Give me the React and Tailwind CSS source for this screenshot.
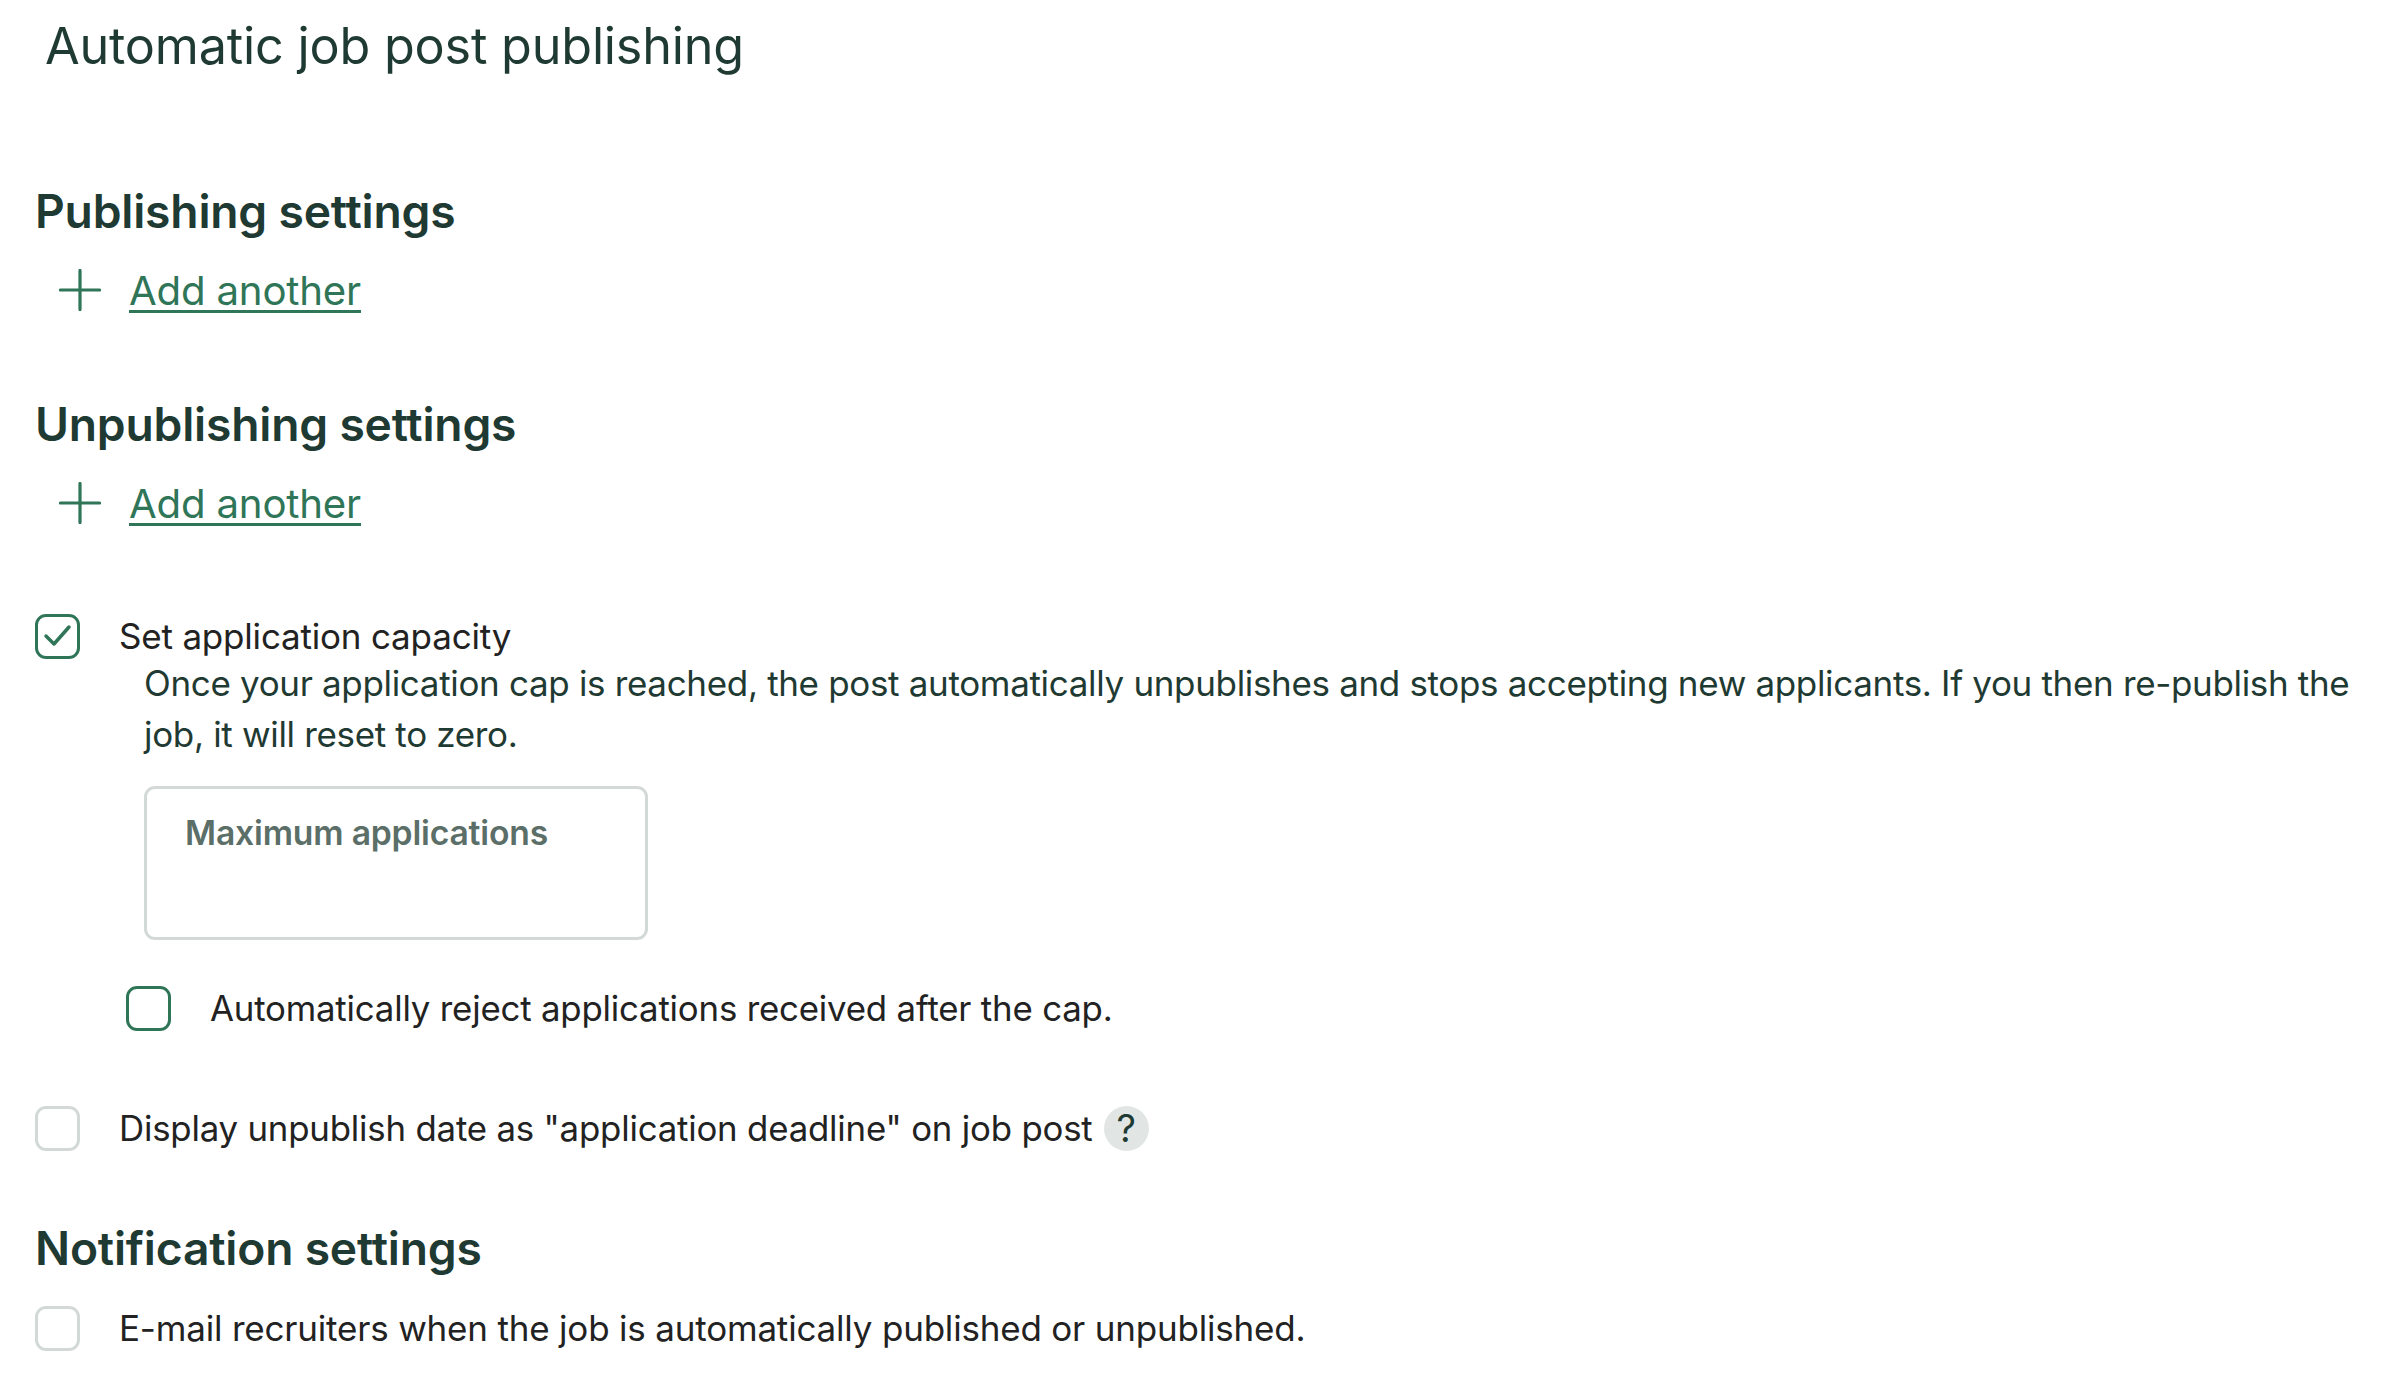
import React from 'react';

function PlusIcon() {
  return (
    <svg width="42" height="42" viewBox="0 0 42 42" fill="none" stroke="#2f7558" strokeWidth="3.2" strokeLinecap="round" className="mt-[-3px]">
      <path d="M21 1.5v39M1.5 21h39" />
    </svg>
  );
}

function Box({ checked, active }) {
  return (
    <span className={`flex h-[45px] w-[45px] shrink-0 items-center justify-center rounded-[11px] border-[3px] bg-white ${active ? 'border-[#2f7558]' : 'border-[#d3d9d7]'}`}>
      {checked && (
        <svg width="30" height="24" viewBox="0 0 30 24" fill="none" stroke="#2f7558" strokeWidth="3.5" strokeLinecap="round" strokeLinejoin="round">
          <path d="M3 12l8 8L26 3" />
        </svg>
      )}
    </span>
  );
}

function AddAnother() {
  return (
    <div className="flex h-[42px] items-center pl-[24px]">
      <PlusIcon />
      <a href="#" className="ml-[28px] text-[40.2px] leading-[42px] text-[#2f7558] underline decoration-[3px] underline-offset-[5px]">Add another</a>
    </div>
  );
}

function Heading({ children }) {
  return <h2 className="text-[46.2px] leading-[60px] font-semibold text-[#1f3a32]">{children}</h2>;
}

export default function App() {
  return (
    <div className="h-[1384px] w-[2398px] overflow-hidden bg-white pl-[35px] font-['Inter',sans-serif] tracking-[-0.012em]">
      <h1 className="pl-[10px] pt-[16px] text-[50.3px] leading-[60px] font-normal text-[#1f3a32]">Automatic job post publishing</h1>

      <div className="mt-[105px]"><Heading>Publishing settings</Heading></div>
      <div className="mt-[29px]"><AddAnother /></div>

      <div className="mt-[82px]"><Heading>Unpublishing settings</Heading></div>
      <div className="mt-[29px]"><AddAnother /></div>

      <div className="mt-[86px] flex items-center gap-[39px]">
        <Box checked active />
        <span className="text-[35px] leading-[50px] text-[#222222]">Set application capacity</span>
      </div>
      <p className="mt-[-3px] ml-[109px] w-[2225px] text-[35px] leading-[51px] tracking-[-0.0095em] text-[#1f3a32]">
        Once your application cap is reached, the post automatically unpublishes and stops accepting new applicants. If you then re-publish the job, it will reset to zero.
      </p>

      <div className="mt-[26px] ml-[109px] h-[154px] w-[504px] rounded-[11px] border-[3px] border-[#d3d9d7] pl-[38px] pt-[24px]">
        <span className="text-[33.7px] leading-[40px] font-semibold text-[#5b6f68]">Maximum applications</span>
      </div>

      <div className="mt-[43px] ml-[91px] flex items-center gap-[39px]">
        <Box active />
        <span className="text-[34.8px] leading-[50px] text-[#222222]">Automatically reject applications received after the cap.</span>
      </div>

      <div className="mt-[70px] flex items-center gap-[39px]">
        <Box />
        <span className="text-[34.8px] leading-[50px] text-[#222222]">Display unpublish date as "application deadline" on job post</span>
        <span className="ml-[-28px] flex h-[45px] w-[45px] items-center justify-center rounded-full bg-[#e1e6e4] text-[38px] text-[#1f3a32]">?</span>
      </div>

      <div className="mt-[65px]"><Heading>Notification settings</Heading></div>

      <div className="mt-[25px] flex items-center gap-[39px]">
        <Box />
        <span className="text-[35px] leading-[50px] text-[#222222]">E-mail recruiters when the job is automatically published or unpublished.</span>
      </div>
    </div>
  );
}
